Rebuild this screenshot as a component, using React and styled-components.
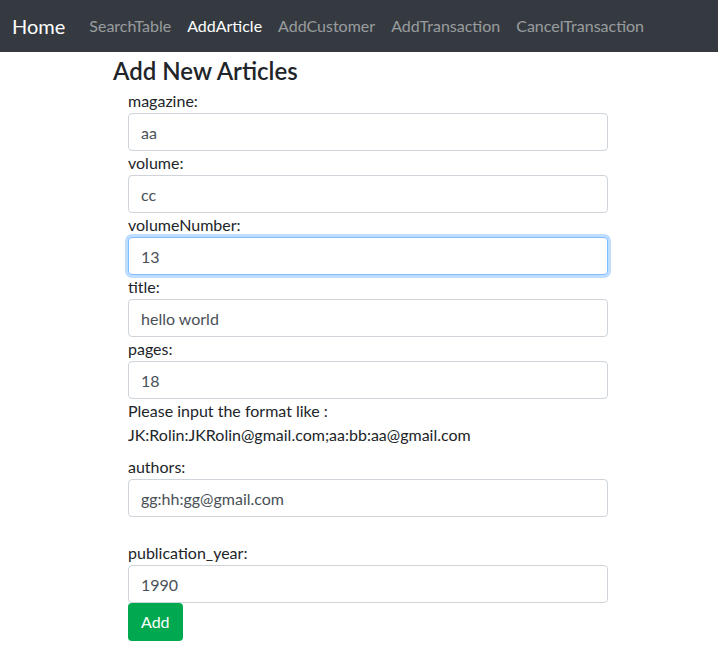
import React from 'react'
import styled, { createGlobalStyle, css } from 'styled-components'

const GlobalStyle = createGlobalStyle`
body {
  margin: 0;
  font-family: Lato, "Noto Sans", sans-serif;
  font-size: 16px;
  line-height: 1.5;
  color: #212529;
  background: #fff;
}
* { box-sizing: border-box; }
`

const NavBar = styled.nav`
height: 52px;
background: #343a40;
display: flex;
align-items: center;
padding: 0 16px 0 12px;
`

const Brand = styled.span`
font-size: 20px;
color: #fff;
margin-right: 16px;
`

const NavLink = styled.span`
padding: 0 8px;
color: ${props => props.active ? '#fff' : 'rgba(255,255,255,.5)'};
`

const Container = styled.div`
padding: 0 0 0 113px;
`

const Heading = styled.h3`
margin: 0;
font-size: 24px;
font-weight: 600;
line-height: 37px;
`

const Form = styled.form`
width: 480px;
margin-left: 15px;
display: flex;
flex-direction: column;
`

const Label = styled.label`
display: block;
line-height: 24px;
`

const Hint = styled.p`
margin: 0 0 8px;
line-height: 24px;
`

const Input = styled.input`
display: block;
width: 100%;
height: 38px;
padding: 6px 12px;
font: inherit;
color: #495057;
background: #fff;
border: 1px solid #ced4da;
border-radius: 4px;
outline: none;
${props => props.focused && css`
  border-color: #80bdff;
  box-shadow: 0 0 0 3px rgba(0,123,255,.25);
`}
`

const Spacer = styled.div`
height: 24px;
`

const Button = styled.button`
align-self: flex-start;
height: 38px;
padding: 6px 13px;
font: inherit;
color: #fff;
background: #00a94f;
border: none;
border-radius: 4px;
`

const fields = [
  { label: 'magazine:', value: 'aa' },
  { label: 'volume:', value: 'cc' },
  { label: 'volumeNumber:', value: '13', focused: true },
  { label: 'title:', value: 'hello world' },
  { label: 'pages:', value: '18' },
]

const Field = ({ label, value, focused }) => (
  <>
    <Label>{label}</Label>
    <Input defaultValue={value} focused={focused} />
  </>
)

const App = () => {
  return (
    <>
      <GlobalStyle />
      <NavBar>
        <Brand>Home</Brand>
        <NavLink>SearchTable</NavLink>
        <NavLink active>AddArticle</NavLink>
        <NavLink>AddCustomer</NavLink>
        <NavLink>AddTransaction</NavLink>
        <NavLink>CancelTransaction</NavLink>
      </NavBar>
      <Container>
        <Heading>Add New Articles</Heading>
        <Form onSubmit={e => e.preventDefault()}>
          {fields.map(f => <Field key={f.label} {...f} />)}
          <Hint>Please input the format like :<br />JK:Rolin:JKRolin@gmail.com;aa:bb:aa@gmail.com</Hint>
          <Field label="authors:" value="gg:hh:gg@gmail.com" />
          <Spacer />
          <Field label="publication_year:" value="1990" />
          <Button type="submit">Add</Button>
        </Form>
      </Container>
    </>
  )
}

export default App
